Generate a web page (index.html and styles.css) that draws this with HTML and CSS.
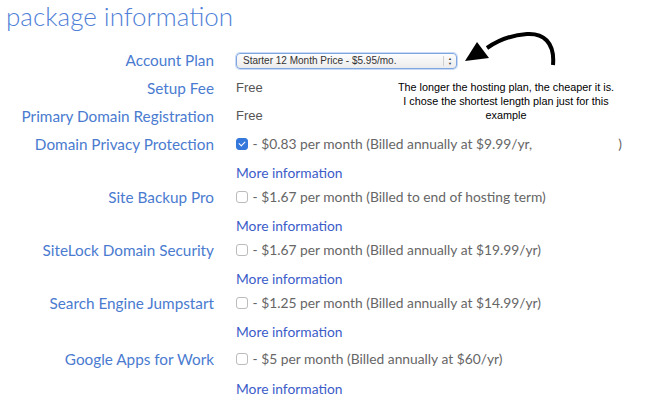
FILE: index.html
```html
<!DOCTYPE html>
<html lang="en">
<head>
    <meta charset="UTF-8">
    <title>Package Information</title>
    <link rel="stylesheet" href="styles.css">
</head>
<body>
    <div class="page">
        <h1 class="title">package information</h1>

        <div class="rows">
            <div class="label">Account Plan</div>
            <div class="value">
                <div class="select">
                    <span>Starter 12 Month Price - $5.95/mo.</span>
                    <span class="select-arrows">&#9650;<br>&#9660;</span>
                </div>
            </div>

            <div class="label">Setup Fee</div>
            <div class="value plain">Free</div>

            <div class="label">Primary Domain Registration</div>
            <div class="value plain">Free</div>

            <!-- Add-ons -->
            <div class="label">Domain Privacy Protection</div>
            <div class="value addon">
                <div class="option"><span class="box checked"></span> - $0.83 per month (Billed annually at $9.99/yr,<span class="redacted"></span>)</div>
                <a class="more" href="#">More information</a>
            </div>

            <div class="label">Site Backup Pro</div>
            <div class="value addon">
                <div class="option"><span class="box"></span> - $1.67 per month (Billed to end of hosting term)</div>
                <a class="more" href="#">More information</a>
            </div>

            <div class="label">SiteLock Domain Security</div>
            <div class="value addon">
                <div class="option"><span class="box"></span> - $1.67 per month (Billed annually at $19.99/yr)</div>
                <a class="more" href="#">More information</a>
            </div>

            <div class="label">Search Engine Jumpstart</div>
            <div class="value addon spaced">
                <div class="option"><span class="box"></span> - $1.25 per month (Billed annually at $14.99/yr)</div>
                <a class="more" href="#">More information</a>
            </div>

            <div class="label">Google Apps for Work</div>
            <div class="value addon">
                <div class="option"><span class="box"></span> - $5 per month (Billed annually at $60/yr)</div>
                <a class="more last" href="#">More information</a>
            </div>
        </div>

        <!-- Annotation over the form -->
        <svg class="arrow" width="110" height="50" viewBox="0 0 110 50">
            <path d="M90 45 C92 22 80 13 64 14 C48 15 34 21 24 28" fill="none" stroke="#000" stroke-width="4"/>
            <polygon points="2,41 14,22 26,38" fill="#000"/>
        </svg>
        <div class="note">The longer the hosting plan, the cheaper it is.<br>I chose the shortest length plan just for this<br>example</div>
    </div>
</body>
</html>
```

FILE: styles.css
```css
body {
    margin: 0;
    background: #fff;
    font-family: Lato, "Open Sans", sans-serif;
}
.page {
    position: relative;
    padding: 0 6px;
}
.title {
    margin: 0;
    font-size: 26px;
    font-weight: 300;
    color: #4f7fd8;
    line-height: normal;
}
.rows {
    display: grid;
    grid-template-columns: 208px 1fr;
    column-gap: 22px;
    margin-top: 17px;
}
.label {
    text-align: right;
    font-size: 15.3px;
    color: #4a7bd0;
    line-height: 22px;
    margin-bottom: 6px;
}
.value {
    font-size: 13.8px;
    color: #666;
    line-height: 22px;
}
.plain {
    font-family: "Liberation Sans", Arial, sans-serif;
    font-size: 13px;
    color: #555;
}
.select {
    display: flex;
    justify-content: space-between;
    align-items: center;
    width: 213px;
    height: 14px;
    margin-top: 4px;
    border: 1px solid #7ea6e0;
    border-radius: 4px;
    background: linear-gradient(#fdfdfd, #ececec);
    box-shadow: 0 0 0 1px #c8daf5;
    font-family: "Liberation Sans", Arial, sans-serif;
    font-size: 10px;
    color: #333;
    padding-left: 6px;
}
.select-arrows {
    font-size: 4px;
    line-height: 5px;
    padding: 0 4px;
    border-left: 1px solid #d0d0d0;
    color: #444;
}
.addon {
    margin-bottom: 2px;
}
.addon.spaced {
    margin-bottom: 5px;
}
.option {
    display: flex;
    align-items: center;
    white-space: pre;
}
.box {
    display: inline-block;
    width: 10px;
    height: 10px;
    border: 1px solid #bbb;
    border-radius: 3px;
    background: #fff;
    margin-right: 1px;
}
.box.checked {
    background: #3478dc;
    border-color: #3478dc;
    position: relative;
}
.box.checked::after {
    content: "";
    position: absolute;
    left: 3px;
    top: 1px;
    width: 3px;
    height: 5px;
    border: solid #fff;
    border-width: 0 1.5px 1.5px 0;
    transform: rotate(45deg);
}
.redacted {
    display: inline-block;
    width: 86px;
}
.more {
    display: block;
    color: #3b5cc9;
    text-decoration: none;
    margin-top: 7px;
}
.more.last {
    margin-top: 8px;
}
.arrow {
    position: absolute;
    left: 463px;
    top: 20px;
}
.note {
    position: absolute;
    left: 392px;
    top: 80px;
    width: 228px;
    text-align: center;
    font-family: "Liberation Sans", Arial, sans-serif;
    font-size: 10.8px;
    line-height: 14px;
    color: #000;
}
```
